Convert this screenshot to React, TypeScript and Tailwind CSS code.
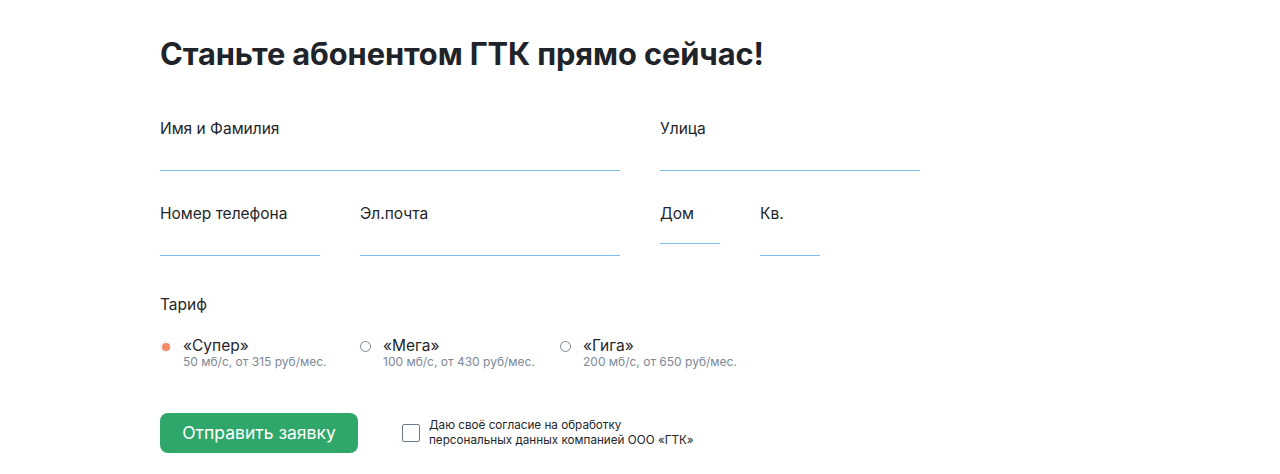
import { useState } from "react";

const tariffs = [
  { id: "super", name: "«Супер»", info: "50 мб/с, от 315 руб/мес." },
  { id: "mega", name: "«Мега»", info: "100 мб/с, от 430 руб/мес." },
  { id: "giga", name: "«Гига»", info: "200 мб/с, от 650 руб/мес." },
];

const Field = ({
  label,
  width,
  inputHeight = "h-[31px]",
}: {
  label: string;
  width: string;
  inputHeight?: string;
}) => (
  <label className={`flex flex-col ${width}`}>
    <span className="text-[15.5px] leading-5 text-[#23262b]">{label}</span>
    <input
      className={`${inputHeight} w-full bg-transparent outline-none text-[15px]`}
      type="text"
    />
    <span className="block h-px w-full bg-[#7dc0ec]" />
  </label>
);

const App = () => {
  const [tariff, setTariff] = useState("super");
  const [agree, setAgree] = useState(false);

  return (
    <div className="w-full min-h-[474px] bg-white pl-[160px] pt-[36px] font-['Inter',sans-serif]">
      <h1 className="text-[30.8px] leading-9 font-bold tracking-[-0.1px] text-[#1f232a]">
        Станьте абонентом ГТК прямо сейчас!
      </h1>

      <form className="mt-[47px]" onSubmit={(e) => e.preventDefault()}>
        <div className="flex gap-10">
          <div className="flex flex-col gap-[33px] w-[460px]">
            <Field label="Имя и Фамилия" width="w-[460px]" />
            <div className="flex gap-10">
              <Field label="Номер телефона" width="w-[160px]" />
              <Field label="Эл.почта" width="w-[260px]" />
            </div>
          </div>
          <div className="flex flex-col gap-[33px] w-[260px]">
            <Field label="Улица" width="w-[260px]" />
            <div className="flex gap-10 items-start">
              <Field label="Дом" width="w-[60px]" inputHeight="h-[19px]" />
              <Field label="Кв." width="w-[60px]" />
            </div>
          </div>
        </div>

        <div className="mt-[36px]">
          <span className="text-[15.5px] leading-5 text-[#23262b]">Тариф</span>
          <div className="flex mt-[22px]">
            {tariffs.map((t) => (
              <label
                key={t.id}
                className="w-[200px] flex items-start gap-[12px] cursor-pointer"
                onClick={() => setTariff(t.id)}
              >
                <span
                  className={`mt-[3px] w-[11px] h-[11px] rounded-full border flex items-center justify-center shrink-0 ${
                    tariff === t.id ? "border-[#e6e8ec]" : "border-[#7b8595]"
                  }`}
                >
                  {tariff === t.id && (
                    <span className="w-[8px] h-[8px] rounded-full bg-[#f38a67]" />
                  )}
                </span>
                <span className="flex flex-col">
                  <span className="text-[15.5px] leading-[16px] text-[#23262b]">{t.name}</span>
                  <span className="text-[12px] leading-[16px] text-[#7d8899]">{t.info}</span>
                </span>
              </label>
            ))}
          </div>
        </div>

        <div className="flex items-center mt-[43px]">
          <button
            type="submit"
            className="w-[198px] h-[40px] rounded-[8px] bg-[#2fa76b] text-white text-[17.5px]"
          >
            Отправить заявку
          </button>
          <label className="ml-[44px] flex items-center gap-[9px] cursor-pointer">
            <span
              className="w-[18px] h-[18px] rounded-[2px] border border-[#6c7a8e] flex items-center justify-center"
              onClick={() => setAgree(!agree)}
            >
              {agree && <span className="w-[10px] h-[10px] bg-[#2fa76b]" />}
            </span>
            <span className="text-[11.7px] leading-[15px] text-[#23262b]">
              Даю своё согласие на обработку
              <br />
              персональных данных компанией ООО «ГТК»
            </span>
          </label>
        </div>
      </form>
    </div>
  );
};

export default App;
